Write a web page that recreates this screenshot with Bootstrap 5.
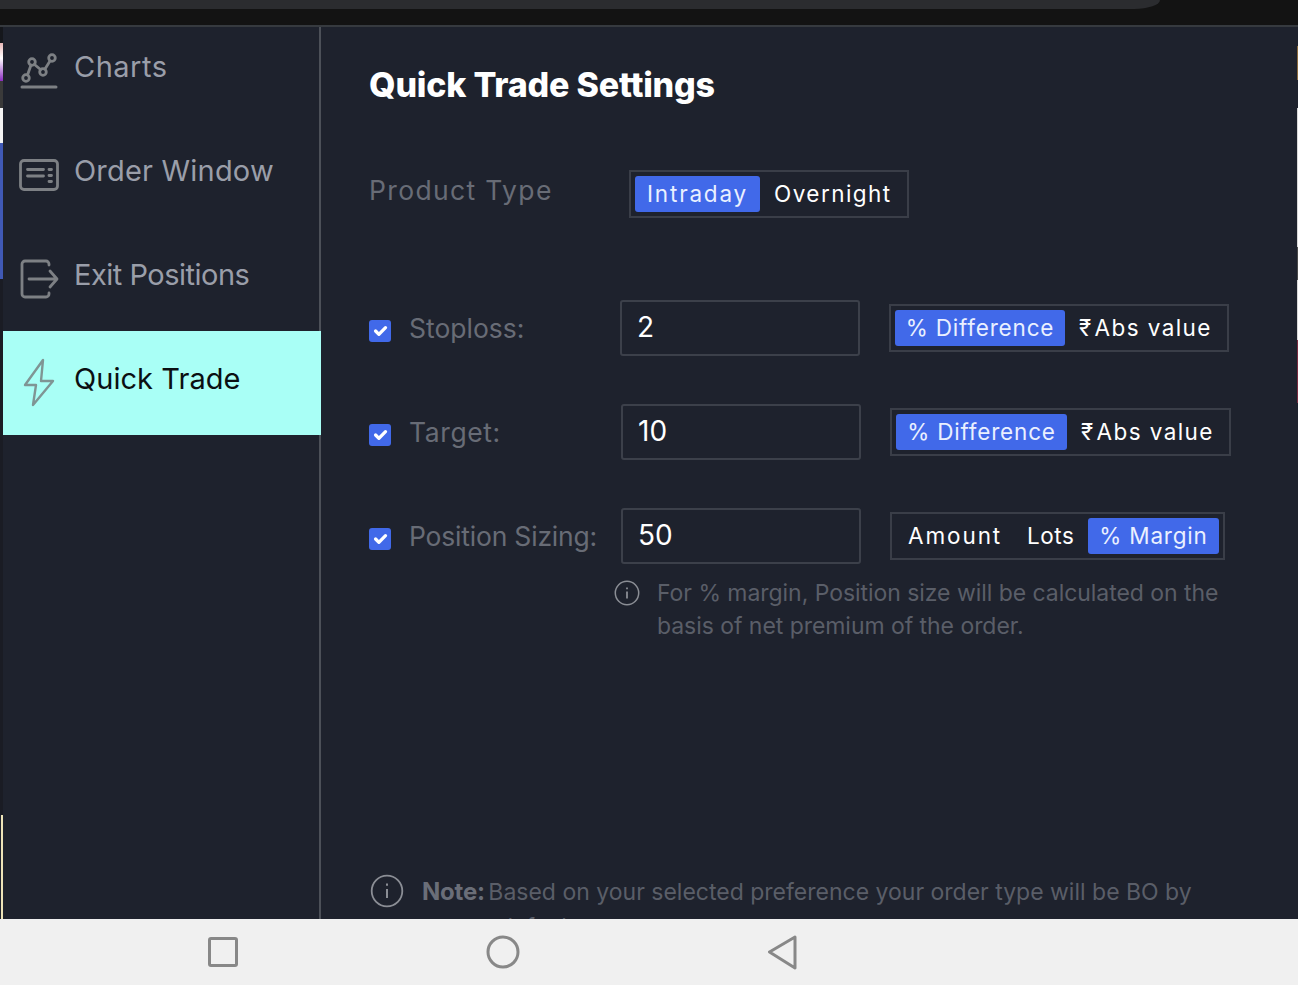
<!DOCTYPE html>
<html lang="en">
<head>
<meta charset="utf-8">
<title>Quick Trade Settings</title>
<link href="https://cdn.jsdelivr.net/npm/bootstrap@5.3.0/dist/css/bootstrap.min.css" rel="stylesheet">
<style>
html,body{height:100%;}
body{background:#131313;font-family:Inter,"Noto Sans","Liberation Sans",sans-serif;overflow:hidden;}
.shell{width:1298px;height:985px;}
.topzone{height:27px;background:#131313;border-bottom:2px solid #363a3f;}
.topbar{width:1160px;height:9px;background:#2b2c2f;border-bottom-right-radius:26px 9px;}
.appzone{height:892px;background:#1e222d;overflow:hidden;}
.edge{width:3px;background:#1a1c24;}
.eg-a{height:16px;background:#15171c;}
.eg-b{height:38px;background:linear-gradient(#e8b8b8,#fff 40%,#8a2bc0);}
.eg-c{height:27px;background:#3a3a3a;}
.eg-d{height:35px;background:#f4f4f4;}
.eg-e{height:136px;background:#4059b5;}
.eg-f{height:536px;}
.eg-g{height:104px;background:linear-gradient(90deg,#1e222d 33%,#eee4b8 33%);}
.edge-r{width:1px;background:#1e222d;}
.er-a{height:19px;}
.er-b{height:34px;background:#8a6a3c;}
.er-c{height:28px;}
.er-d{height:139px;background:#d8d8d8;}
.er-e{height:33px;background:#4a4a4a;}
.er-f{height:60px;background:#d8d8d8;}
.er-g{height:63px;background:#7a2b40;}
.side{width:318px;border-right:2px solid #4c5058;}
.side-item{height:104px;padding:0 0 0 16px;color:#9a9ea9;font-size:29px;letter-spacing:.2px;gap:15px;margin-right:-2px;}
.side-item span{margin-bottom:8px;}
.side-item.first{height:96px;padding-bottom:8px;letter-spacing:.5px;}
.side-item.snug{letter-spacing:-.5px;}
.side-item.tight{letter-spacing:.05px;}
.side-item.on{background:#a9fff6;color:#0b0f12;}
.side-ico{width:40px;height:40px;flex:none;}
.side-bolt{width:40px;height:50px;flex:none;}
.panel{padding:36px 0 0 48px;min-width:0;}
.title{font-size:34px;font-weight:800;color:#fff;line-height:44px;margin:0 0 63px;letter-spacing:-.2px;}
.lbl{color:#686c76;font-size:26.5px;line-height:40px;}
.ptype{height:48px;margin-bottom:82px;}
.ptype .lbl{width:260px;margin-top:-8px;letter-spacing:1.35px;}
.seg{border:2px solid #3a3e48;padding:4px;height:48px;background:#1e222d;}
.seg .btn{height:36px;padding:0;font-size:22.5px;line-height:36px;color:#fff;border:0;border-radius:3px;letter-spacing:1.35px;white-space:nowrap;font-weight:400;}
.seg .btn.sel{background:#4169e9;color:#eaf0ff;letter-spacing:.8px;}
.w-a{width:280px;}
.w-b{width:340px;}
.w-b2{width:341px;}
.w-c{width:335px;}
.w-a .sel{width:125px;letter-spacing:1.8px !important;}
.w-a .plain{padding-left:14px;letter-spacing:1.45px;}
.w-b .sel{width:170px;}
.w-b2 .sel{width:171px;}
.w-b .plain,.w-b2 .plain{padding-left:14px;letter-spacing:1.4px;}
.rupee{margin-right:2px;}
.w-c .sel{width:131px;margin-left:auto;}
.w-c .plain{padding-left:12px;letter-spacing:1.9px;}
.w-c .plain + .plain{padding-left:25px;letter-spacing:.5px;}
.trow{height:56px;margin-bottom:48px;}
.trow .form-check-input{width:22px;height:22px;margin:20px 18px 0 0;flex:none;background-color:#4169e9;border:0;border-radius:3px;}
.trow .lbl{width:212px;margin-top:8px;white-space:nowrap;letter-spacing:-.2px;}
.trow.r1 .lbl{width:211px;letter-spacing:0;}
.trow.r2 .lbl{letter-spacing:.6px;}
.trow .form-control{width:240px;height:56px;background:#1e222d;border:2px solid #3c404a;border-radius:3px;color:#fff;font-size:28px;padding:0 15px 2px;flex:none;box-shadow:none;}
.trow .seg{margin:4px 0 0 29px;}
.info{margin:-35px 0 0 245px;gap:17px;color:#5a5e68;font-size:23px;line-height:33px;width:620px;letter-spacing:-.05px;}
.info svg{width:26px;height:26px;flex:none;margin-top:3px;}
.noteline{margin-top:231px;gap:18px;color:#5a5e68;font-size:23px;line-height:35px;width:860px;}
.noteline svg{width:34px;height:34px;flex:none;margin-left:1px;}
.noteline b{font-weight:700;color:#6a6e78;font-size:24px;letter-spacing:-.2px;margin-right:-3px;}
.note-second{padding-left:77px;}
.navbot{height:66px;background:#f0f0f0;padding:2px 0 0 206px;}
.navbot svg{width:36px;height:36px;flex:none;}
.nb-gap{margin-left:244px;}
.nb-back{margin-left:246px;}
</style>
</head>
<body>
<div class="shell d-flex flex-column">
  <div class="topzone"><div class="topbar"></div></div>
  <div class="appzone d-flex">
    <div class="edge d-flex flex-column flex-shrink-0">
      <div class="eg-a"></div><div class="eg-b"></div><div class="eg-c"></div><div class="eg-d"></div><div class="eg-e"></div><div class="eg-f"></div><div class="eg-g"></div>
    </div>
    <nav class="side flex-shrink-0">
      <div class="side-item first d-flex align-items-center">
        <svg class="side-ico" viewBox="0 0 40 40" fill="none" stroke="#7d8084" stroke-width="2.800" stroke-linecap="round">
          <circle cx="7" cy="27" r="3.300"/><circle cx="13" cy="11" r="3.300"/><circle cx="24" cy="21" r="3.300"/><circle cx="33" cy="7" r="3.300"/>
          <path d="M8.500 24l3.500-10M15.500 13.500l6 5M26 18l5-8"/><path d="M3 36h34" stroke-width="3"/>
        </svg>
        <span>Charts</span>
      </div>
      <div class="side-item d-flex align-items-center">
        <svg class="side-ico" viewBox="0 0 40 40" fill="none" stroke="#7d8084" stroke-width="2.800" stroke-linecap="round">
          <rect x="1.500" y="5.500" width="37" height="29" rx="3.500"/><path d="M8.500 14.500h16M8.500 21h16"/><path d="M30 14.500h2.500M30 20.500h2.500M30 26.500h2.500"/>
        </svg>
        <span>Order Window</span>
      </div>
      <div class="side-item snug d-flex align-items-center">
        <svg class="side-ico" viewBox="0 0 40 40" fill="none" stroke="#7d8084" stroke-width="2.800" stroke-linecap="round" stroke-linejoin="round">
          <path d="M30 6V5a3 3 0 0 0-3-3H6a3 3 0 0 0-3 3v30a3 3 0 0 0 3 3h21a3 3 0 0 0 3-3v-1"/><path d="M10 20h27M31 12l7 8-7 8"/>
        </svg>
        <span>Exit Positions</span>
      </div>
      <div class="side-item tight on d-flex align-items-center">
        <svg class="side-bolt" viewBox="0 0 40 50" fill="none" stroke="#7f9594" stroke-width="2.400" stroke-linejoin="round">
          <path d="M24 2L6 27h11l-3 20 20-24H22z"/>
        </svg>
        <span>Quick Trade</span>
      </div>
    </nav>
    <main class="panel flex-grow-1">
      <h1 class="title">Quick Trade Settings</h1>
      <div class="ptype d-flex align-items-center">
        <span class="lbl">Product Type</span>
        <div class="seg w-a d-flex">
          <button class="btn sel">Intraday</button><button class="btn plain">Overnight</button>
        </div>
      </div>
      <div class="trow r1 d-flex align-items-start">
        <input class="form-check-input" type="checkbox" checked aria-label="Stoploss">
        <span class="lbl">Stoploss:</span>
        <input class="form-control" type="text" value="2" aria-label="Stoploss value">
        <div class="seg w-b d-flex">
          <button class="btn sel">% Difference</button><button class="btn plain"><span class="rupee">₹</span>Abs value</button>
        </div>
      </div>
      <div class="trow r2 d-flex align-items-start">
        <input class="form-check-input" type="checkbox" checked aria-label="Target">
        <span class="lbl">Target:</span>
        <input class="form-control" type="text" value="10" aria-label="Target value">
        <div class="seg w-b2 d-flex">
          <button class="btn sel">% Difference</button><button class="btn plain"><span class="rupee">₹</span>Abs value</button>
        </div>
      </div>
      <div class="trow d-flex align-items-start">
        <input class="form-check-input" type="checkbox" checked aria-label="Position Sizing">
        <span class="lbl">Position Sizing:</span>
        <input class="form-control" type="text" value="50" aria-label="Position Sizing value">
        <div class="seg w-c d-flex">
          <button class="btn plain">Amount</button><button class="btn plain">Lots</button><button class="btn sel">% Margin</button>
        </div>
      </div>
      <div class="info d-flex">
        <svg viewBox="0 0 26 26" fill="none" stroke="#8b8e95" stroke-width="1.500"><circle cx="13" cy="13" r="11.700"/><path d="M13 11.500v7" stroke-width="1.800"/><path d="M13 7.500v1.800" stroke-width="1.800"/></svg>
        <div>For % margin, Position size will be calculated on the basis of net premium of the order.</div>
      </div>
      <div class="noteline d-flex">
        <svg viewBox="0 0 34 34" fill="none" stroke="#8b8e95" stroke-width="1.800"><circle cx="17" cy="17" r="15.300"/><path d="M17 15v9" stroke-width="2"/><path d="M17 9.500v2.200" stroke-width="2"/></svg>
        <div><b>Note:</b> <span>Based on your selected preference your order type will be BO by</span><span class="d-block note-second">default</span></div>
      </div>
    </main>
    <div class="edge-r d-flex flex-column flex-shrink-0">
      <div class="er-a"></div><div class="er-b"></div><div class="er-c"></div><div class="er-d"></div><div class="er-e"></div><div class="er-f"></div><div class="er-g"></div>
    </div>
  </div>
  <div class="navbot d-flex align-items-center">
    <svg viewBox="0 0 36 36" fill="none" stroke="#888" stroke-width="3"><rect x="3.500" y="3.500" width="27" height="27" rx="1.500"/></svg>
    <svg class="nb-gap" viewBox="0 0 36 36" fill="none" stroke="#888" stroke-width="3"><circle cx="17" cy="17" r="15"/></svg>
    <svg class="nb-back" viewBox="0 0 36 36" fill="none" stroke="#888" stroke-width="3" stroke-linejoin="round"><path d="M27 2L1.500 17 27 33z"/></svg>
  </div>
</div>
<script src="https://cdn.jsdelivr.net/npm/bootstrap@5.3.0/dist/js/bootstrap.bundle.min.js"></script>
</body>
</html>
